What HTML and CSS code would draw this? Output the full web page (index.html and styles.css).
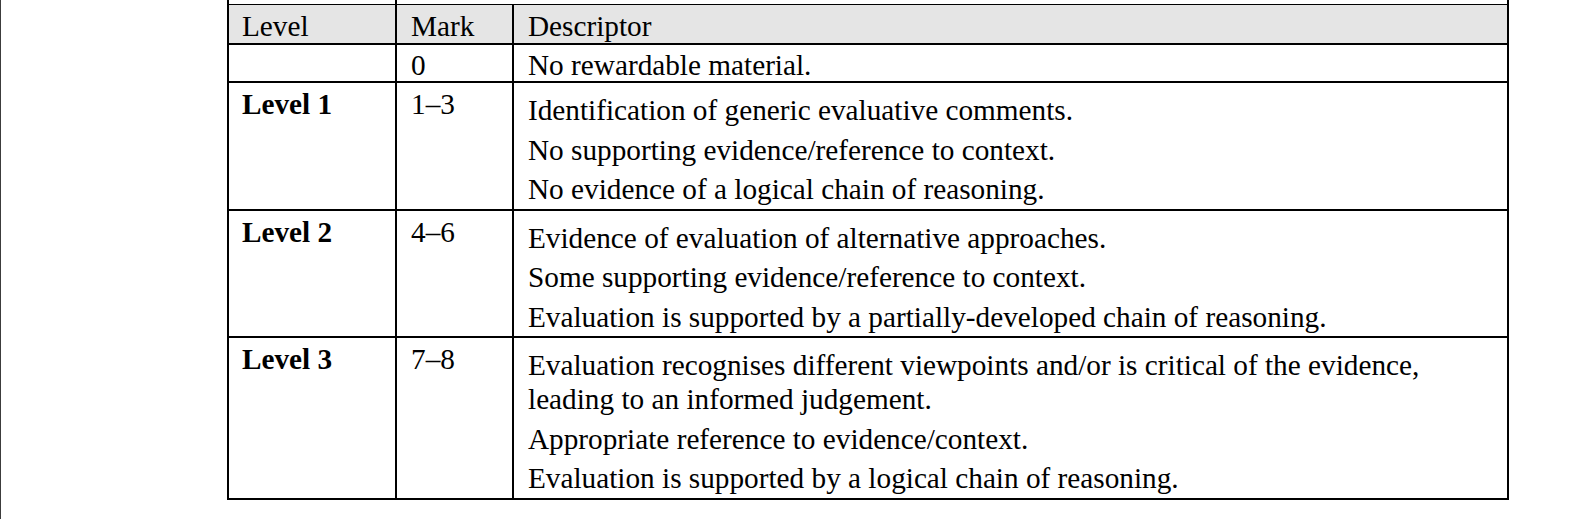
FILE: index.html
```html
<!DOCTYPE html>
<html lang="en">
<head>
<meta charset="utf-8">
<title>Levels of response</title>
<link rel="stylesheet" href="styles.css">
</head>
<body>
<div class="page">
  <div class="prev-row"><div class="prev-cell"></div></div>
  <table class="grid">
    <colgroup>
      <col class="c-level">
      <col class="c-mark">
      <col class="c-desc">
    </colgroup>
    <thead>
      <tr>
        <th>Level</th>
        <th>Mark</th>
        <th>Descriptor</th>
      </tr>
    </thead>
    <tbody>
      <tr class="zero">
        <td></td>
        <td>0</td>
        <td>No rewardable material.</td>
      </tr>
      <tr>
        <td class="lvl">Level 1</td>
        <td>1–3</td>
        <td class="desc">
          <p>Identification of generic evaluative comments.</p>
          <p>No supporting evidence/reference to context.</p>
          <p>No evidence of a logical chain of reasoning.</p>
        </td>
      </tr>
      <tr>
        <td class="lvl">Level 2</td>
        <td>4–6</td>
        <td class="desc">
          <p>Evidence of evaluation of alternative approaches.</p>
          <p>Some supporting evidence/reference to context.</p>
          <p>Evaluation is supported by a partially-developed chain of reasoning.</p>
        </td>
      </tr>
      <tr>
        <td class="lvl">Level 3</td>
        <td>7–8</td>
        <td class="desc">
          <p>Evaluation recognises different viewpoints and/or is critical of the evidence, leading to an informed judgement.</p>
          <p>Appropriate reference to evidence/context.</p>
          <p>Evaluation is supported by a logical chain of reasoning.</p>
        </td>
      </tr>
    </tbody>
  </table>
</div>
</body>
</html>
```

FILE: styles.css
```css
html, body {
  margin: 0;
  padding: 0;
  background: #ffffff;
}

.page {
  box-sizing: border-box;
  height: 519px;
  border-left: 1px solid #3c3c3c;
  padding-left: 226px;
  display: flex;
  flex-direction: column;
  font-family: "Liberation Serif", "Times New Roman", serif;
  font-size: 29.25px;
  color: #000;
}

.prev-row {
  box-sizing: border-box;
  width: 1282px;
  height: 4px;
  border-left: 2px solid #000;
  border-right: 2px solid #000;
  display: flex;
}

.prev-cell {
  box-sizing: border-box;
  width: 168px;
  border-right: 2px solid #000;
}

.grid {
  width: 1282px;
  table-layout: fixed;
  border-collapse: separate;
  border-spacing: 0;
  border-left: 2px solid #000;
  border-top: 1px solid #000;
  font-size: 29.25px;
}

.c-level { width: 168px; }
.c-mark { width: 117px; }
.c-desc { width: 995px; }

.grid th,
.grid td {
  box-sizing: border-box;
  border-right: 2px solid #000;
  border-bottom: 2px solid #000;
  text-align: left;
  vertical-align: top;
  line-height: 34px;
  padding: 4px 14px 2px 14px;
}

.grid th {
  font-weight: normal;
  background: #e5e5e5;
  padding-bottom: 0;
}

.grid th:first-child,
.grid td:first-child {
  padding-left: 13px;
}

.grid tr.zero td {
  line-height: 32px;
  padding-top: 4px;
  padding-bottom: 0;
}

.lvl {
  font-weight: bold;
}

.grid td.desc {
  padding-top: 4.5px;
  padding-bottom: 2.5px;
}

.desc p {
  margin: 5.5px 0 0 0;
}
```
